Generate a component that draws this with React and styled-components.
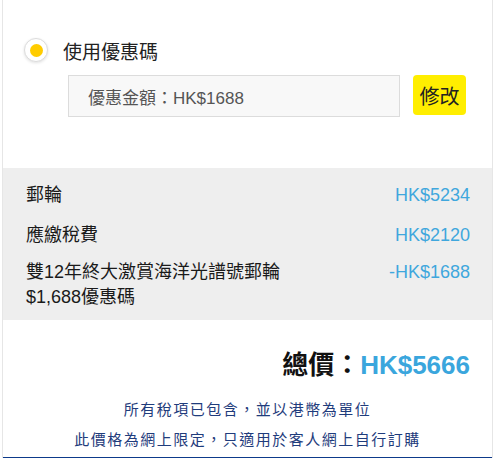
import React from "react";
import styled, { createGlobalStyle } from "styled-components";

const Global = createGlobalStyle`
  html, body { margin: 0; padding: 0; background: #ffffff; }
  body { font-family: "Liberation Sans", "Noto Sans CJK TC", Arial, sans-serif; color: #222; }
`;

const Page = styled.div`
  padding-left: 2px;
  width: 495px;
  box-sizing: border-box;
`;

const Card = styled.div`
  width: 491px;
  box-sizing: border-box;
  border-left: 1px solid #e6e6e6;
  border-right: 1px solid #e6e6e6;
  background: #fff;
`;

const CouponSection = styled.div`
  padding: 38px 0 51px 21px;
  display: flex;
  flex-direction: column;
  gap: 13px;
`;

const RadioRow = styled.label`
  display: flex;
  align-items: center;
  gap: 15px;
  height: 24px;
  font-size: 19px;
  color: #222;
`;

const Radio = styled.span`
  width: 24px;
  height: 24px;
  box-sizing: border-box;
  border-radius: 50%;
  border: 1px solid #dcdcdc;
  background: #fff;
  box-shadow: 0 1px 3px rgba(0, 0, 0, 0.12);
  display: flex;
  align-items: center;
  justify-content: center;
  &::after {
    content: "";
    width: 13px;
    height: 13px;
    border-radius: 50%;
    background: #ffcc00;
  }
`;

const InputRow = styled.div`
  display: flex;
  align-items: flex-start;
  gap: 13px;
  margin-left: 44px;
`;

const CodeBox = styled.div`
  width: 332px;
  height: 42px;
  box-sizing: border-box;
  background: #f8f8f8;
  border: 1px solid #dcdcdc;
  padding-left: 19px;
  display: flex;
  align-items: center;
  font-size: 17px;
  color: #555;
`;

const EditButton = styled.button`
  width: 53px;
  height: 40px;
  border: none;
  border-radius: 4px;
  background: #ffee00;
  color: #222;
  font-family: inherit;
  font-size: 20px;
  padding: 0;
  cursor: pointer;
`;

const Breakdown = styled.div`
  background: #eeeeee;
  padding: 15px 22px 10px 23px;
  display: flex;
  flex-direction: column;
  gap: 15px;
`;

const Row = styled.div`
  display: flex;
  justify-content: space-between;
  align-items: flex-start;
  font-size: 18px;
  line-height: 25px;
  margin-top: ${(p) => (p.$tight ? "-3px" : "0")};
`;

const Label = styled.span`
  color: #1a1a1a;
  max-width: ${(p) => (p.$narrow ? "275px" : "none")};
`;

const Amount = styled.span`
  color: #3fa7dd;
  white-space: nowrap;
`;

const TotalSection = styled.div`
  padding: 30px 22px 0 22px;
`;

const Total = styled.div`
  text-align: right;
  font-size: 26px;
  font-weight: bold;
  line-height: 30px;
  color: #111;
`;

const TotalValue = styled.span`
  color: #3aa6dd;
`;

const Notes = styled.div`
  margin-top: 15px;
  display: flex;
  flex-direction: column;
  align-items: center;
`;

const Note = styled.div`
  font-size: 15px;
  letter-spacing: 1.5px;
  line-height: 30px;
  color: #1f3c7c;
`;

const BottomBar = styled.div`
  margin-top: 2px;
  height: 4px;
  background: #0d3a8a;
`;

export default function App() {
  return (
    <Page>
      <Global />
      <Card>
        <CouponSection>
          <RadioRow>
            <Radio />
            使用優惠碼
          </RadioRow>
          <InputRow>
            <CodeBox>優惠金額：HK$1688</CodeBox>
            <EditButton>修改</EditButton>
          </InputRow>
        </CouponSection>
        <Breakdown>
          <Row>
            <Label>郵輪</Label>
            <Amount>HK$5234</Amount>
          </Row>
          <Row>
            <Label>應繳稅費</Label>
            <Amount>HK$2120</Amount>
          </Row>
          <Row $tight>
            <Label $narrow>雙12年終大激賞海洋光譜號郵輪 $1,688優惠碼</Label>
            <Amount>-HK$1688</Amount>
          </Row>
        </Breakdown>
        <TotalSection>
          <Total>
            總價：<TotalValue>HK$5666</TotalValue>
          </Total>
        </TotalSection>
        <Notes>
          <Note>所有稅項已包含，並以港幣為單位</Note>
          <Note>此價格為網上限定，只適用於客人網上自行訂購</Note>
        </Notes>
        <BottomBar />
      </Card>
    </Page>
  );
}
